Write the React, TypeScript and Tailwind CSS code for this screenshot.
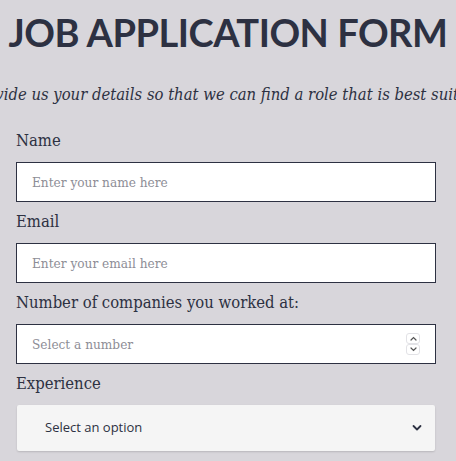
import { useState } from "react";

const fields = [
  { id: "name", label: "Name", placeholder: "Enter your name here", type: "text" },
  { id: "email", label: "Email", placeholder: "Enter your email here", type: "email" },
];

export default function App() {
  const [exp, setExp] = useState("");

  return (
    <div
      className="min-h-screen overflow-hidden bg-[#d8d6db] text-[#2d3142] font-stretch-condensed"
      style={{ fontFamily: '"DejaVu Serif", serif' }}
    >
      {/* Header */}
      <h1
        className="pt-[8px] text-center text-[38px] font-bold leading-[48px] tracking-[-0.5px] whitespace-nowrap font-stretch-normal"
        style={{ fontFamily: 'Lato, "Noto Sans", sans-serif' }}
      >
        JOB APPLICATION FORM
      </h1>
      <div className="mt-[27px] flex justify-center">
        <p className="shrink-0 whitespace-nowrap text-[16.5px] italic leading-6">
          Please provide us your details so that we can find a role that is best suited for you.
        </p>
      </div>

      {/* Form */}
      <form className="mt-[22px] flex flex-col pl-4 pr-5" onSubmit={(e) => e.preventDefault()}>
        {fields.map((f) => (
          <div key={f.id} className="mb-[8px] flex flex-col">
            <label htmlFor={f.id} className="text-[16.5px] leading-6">
              {f.label}
            </label>
            <input
              id={f.id}
              type={f.type}
              placeholder={f.placeholder}
              className="mt-[9px] h-10 w-full border border-[#2d3142] bg-white pl-[15px] pr-4 text-[13.5px] text-[#2d3142] outline-none placeholder:text-[#8d8d96]"
            />
          </div>
        ))}

        <div className="mb-[8px] flex flex-col">
          <label htmlFor="count" className="text-[16.5px] leading-6">
            Number of companies you worked at:
          </label>
          <div className="relative mt-[9px]">
            <input
              id="count"
              type="number"
              placeholder="Select a number"
              className="h-10 w-full appearance-none border border-[#2d3142] bg-white pl-[15px] pr-4 text-[13.5px] text-[#2d3142] outline-none placeholder:text-[#8d8d96] [&::-webkit-inner-spin-button]:appearance-none"
            />
            <div className="pointer-events-none absolute right-[16px] top-1/2 flex -translate-y-1/2 flex-col">
              <span className="flex h-[11px] w-[14px] items-center justify-center rounded-[3px] border border-[#e2e2e6] bg-white">
                <svg width="7" height="5" viewBox="0 0 7 5" fill="none">
                  <path d="M1 4L3.5 1.5L6 4" stroke="#555" strokeWidth="1.2" strokeLinecap="round" />
                </svg>
              </span>
              <span className="flex h-[11px] w-[14px] items-center justify-center rounded-[3px] border border-[#e2e2e6] bg-white">
                <svg width="7" height="5" viewBox="0 0 7 5" fill="none">
                  <path d="M1 1L3.5 3.5L6 1" stroke="#555" strokeWidth="1.2" strokeLinecap="round" />
                </svg>
              </span>
            </div>
          </div>
        </div>

        <div className="flex flex-col">
          <label htmlFor="exp" className="text-[16.5px] leading-6">
            Experience
          </label>
          <div className="relative mt-[9px] mx-px">
            <select
              id="exp"
              value={exp}
              onChange={(e) => setExp(e.target.value)}
              className="h-[46px] w-full appearance-none rounded-[2px] bg-[#f5f5f5] pl-7 text-[13px] text-[#2d3142] shadow-[0_1px_2px_rgba(0,0,0,0.15)] outline-none font-stretch-normal"
              style={{ fontFamily: '"Open Sans", "Noto Sans", sans-serif' }}
            >
              <option value="">Select an option</option>
              <option value="0-1">0-1 years</option>
              <option value="1-3">1-3 years</option>
              <option value="3-5">3-5 years</option>
              <option value="5+">5+ years</option>
            </select>
            <svg
              className="pointer-events-none absolute right-[13px] top-1/2 -translate-y-1/2"
              width="10"
              height="7"
              viewBox="0 0 10 7"
              fill="none"
            >
              <path d="M1.5 1.5L5 5L8.5 1.5" stroke="#2d3142" strokeWidth="1.8" strokeLinecap="round" strokeLinejoin="round" />
            </svg>
          </div>
        </div>
      </form>
    </div>
  );
}
